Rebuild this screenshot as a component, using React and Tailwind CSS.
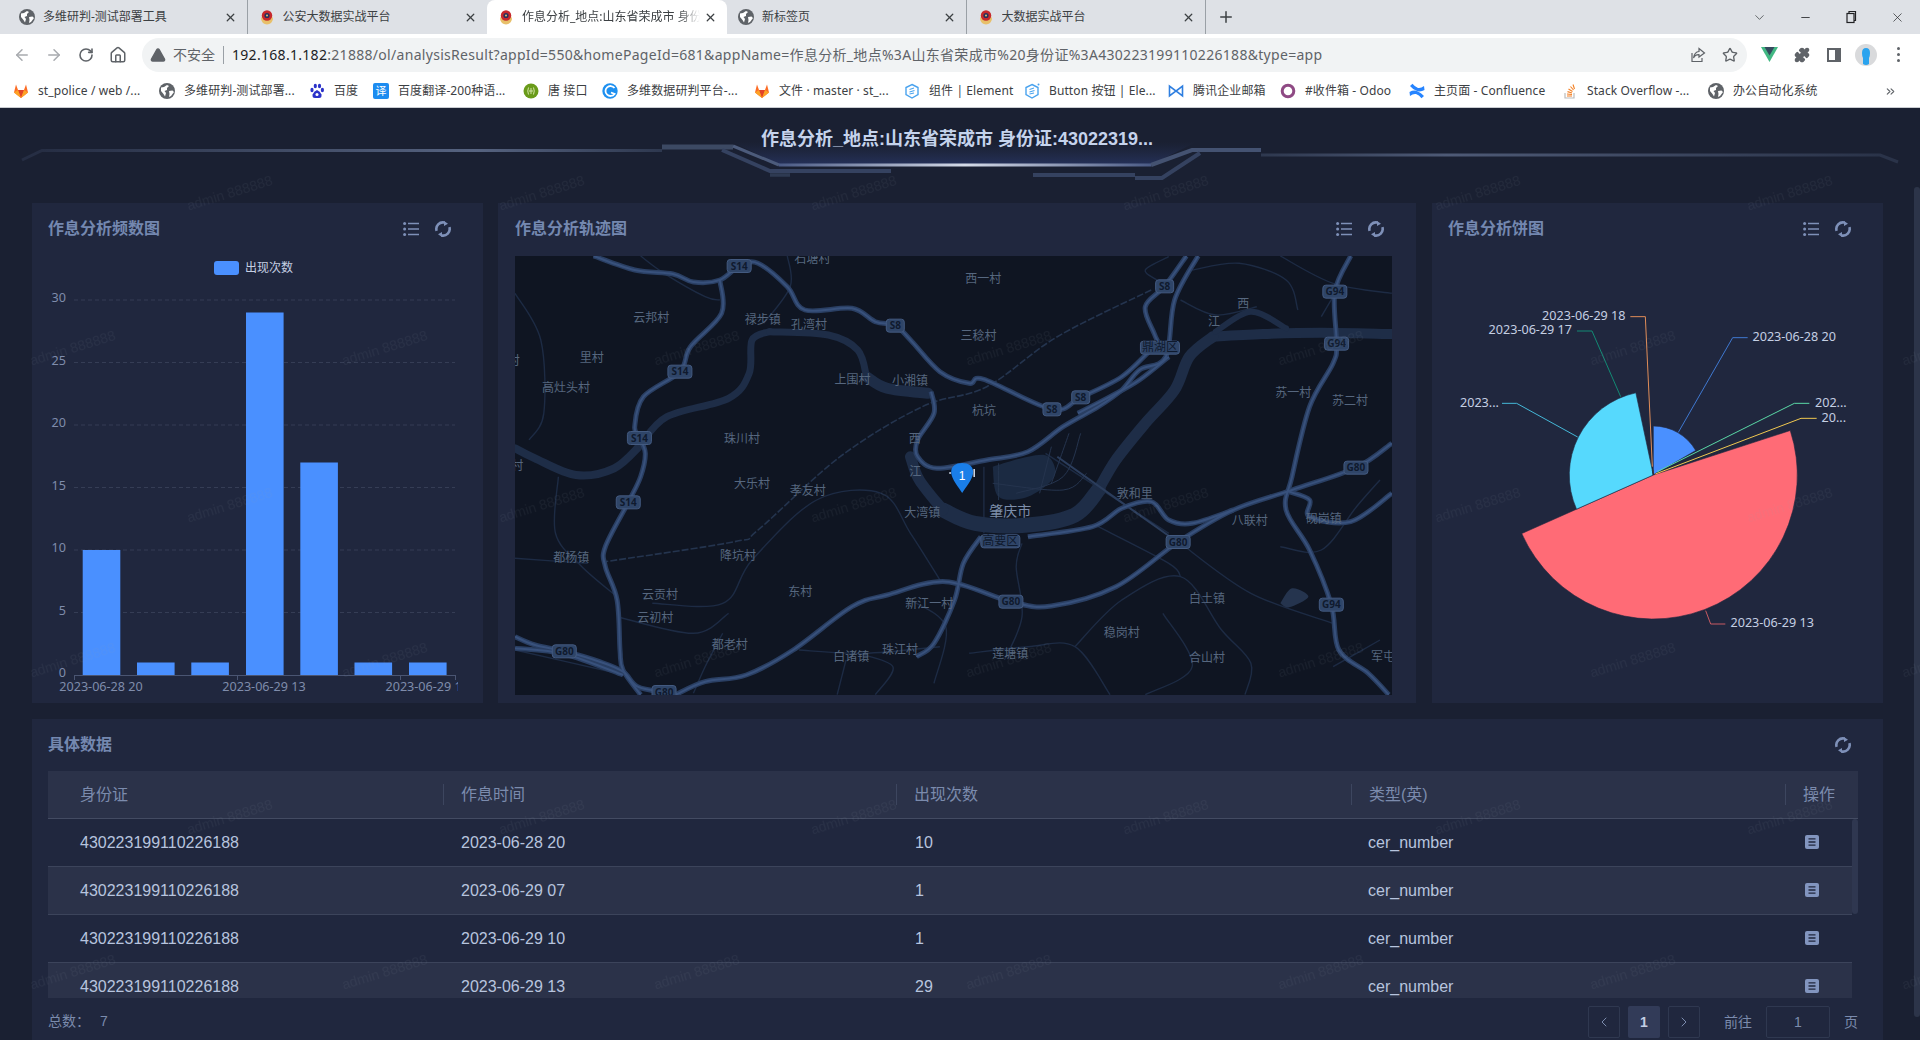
import React from 'react';
import { ArrowLeft, ArrowRight, RotateCw, Home, Star, Puzzle, ChevronDown, Minus, X, Plus, ChevronLeft, ChevronRight, TriangleAlert, ChevronsRight } from 'lucide-react';

const Globe = () => (
  <svg width="16" height="16" viewBox="0 0 16 16" className="shrink-0">
    <circle cx="8" cy="8" r="8" fill="#5f6368" />
    <path d="M2 4.5 L5 4 L8 2 L10 3 L8 5 L8 7 L5.5 8 L7 10 L6 13.5 L4.5 11 L2 8 Z M10 8 L13.5 7.5 L15 9 L12 13 L10 14 L10.5 11 Z" fill="#fff" />
  </svg>
);
const Police = () => (
  <svg width="16" height="16" viewBox="0 0 16 16" className="shrink-0">
    <path d="M2 10 Q3 15 8 15.5 Q13 15 14 10 L12 4 L4 4 Z" fill="#e8c06a" />
    <circle cx="8" cy="6.5" r="5.2" fill="#c6282c" />
    <circle cx="8" cy="6.5" r="2.6" fill="#27305e" />
    <circle cx="8" cy="6.5" r="1" fill="#e8c06a" />
  </svg>
);
const Fox = () => (
  <svg width="16" height="16" viewBox="0 0 16 16" className="shrink-0">
    <path d="M8 15 L1 9.5 L3 1.5 L5 7 L11 7 L13 1.5 L15 9.5 Z" fill="#fc6d26" />
    <path d="M8 15 L5 7 L11 7 Z" fill="#e24329" />
    <path d="M8 15 L1 9.5 L5 7 Z M8 15 L15 9.5 L11 7 Z" fill="#fca326" />
  </svg>
);
const Paw = () => (
  <svg width="16" height="16" viewBox="0 0 16 16" className="shrink-0" fill="#2b32c9">
    <ellipse cx="3" cy="7" rx="1.6" ry="2.2" /><ellipse cx="6.3" cy="3" rx="1.6" ry="2.2" /><ellipse cx="10.5" cy="3" rx="1.6" ry="2.2" /><ellipse cx="13.4" cy="7" rx="1.6" ry="2.2" />
    <path d="M8 7 Q11 8 12.5 11.5 Q13 15 10 15 L6 15 Q3 15 3.6 11.5 Q5 8 8 7 Z" />
    <circle cx="8" cy="11.5" r="1.5" fill="#fff" />
  </svg>
);
const Fanyi = () => (
  <span className="w-4 h-4 rounded-[2px] bg-[#1d8cf0] text-white text-[11px] leading-4 text-center shrink-0">译</span>
);
const Api = () => (
  <svg width="16" height="16" viewBox="0 0 16 16" className="shrink-0">
    <circle cx="8" cy="8" r="7.5" fill="#6a9b1a" />
    <path d="M5.5 4.5 Q4 8 5.5 11.5 M10.5 4.5 Q12 8 10.5 11.5 M6 8 H10 M8 5 V11" stroke="#d4e4a8" strokeWidth="1" fill="none" />
  </svg>
);
const Swirl = () => (
  <svg width="16" height="16" viewBox="0 0 16 16" className="shrink-0">
    <circle cx="8" cy="8" r="7.7" fill="#1e90f0" />
    <path d="M12.5 5 A5 5 0 1 0 12.5 11 L9 9.5" stroke="#fff" strokeWidth="1.8" fill="none" />
  </svg>
);
const Hex = ({ plus }) => (
  <svg width="16" height="16" viewBox="0 0 16 16" className="shrink-0">
    <path d="M8 1.5 L14 4.5 V11.5 L8 15 L2 11.5 V4.5 Z" stroke="#4aa3ee" strokeWidth="1.4" fill="#fff" />
    <path d="M5.5 6.5 L10 5 M5.5 9 L10.5 7.5 M5.5 11 L10 10" stroke="#4aa3ee" strokeWidth="1.1" />
    {plus && <circle cx="14.5" cy="1.5" r="1" fill="#4aa3ee" />}
  </svg>
);
const Mail = () => (
  <svg width="16" height="16" viewBox="0 0 16 16" className="shrink-0" fill="none" stroke="#2f7fe0" strokeWidth="1.6">
    <path d="M1.5 3 V13 L8 8 L1.5 3 Z M14.5 3 V13 L8 8 L14.5 3 Z" />
  </svg>
);
const Odoo = () => (
  <svg width="16" height="16" viewBox="0 0 16 16" className="shrink-0"><circle cx="8" cy="8" r="5.8" stroke="#8f4a84" strokeWidth="3" fill="none" /></svg>
);
const Conf = () => (
  <svg width="16" height="16" viewBox="0 0 16 16" className="shrink-0" fill="#2684ff">
    <path d="M1 3 L3.5 0.8 Q6 4 9 5 Q12 5.5 15 3 L15.5 7 Q11 9.5 7 7.5 Q3.5 6 1 3 Z" />
    <path d="M15 13 L12.5 15.2 Q10 12 7 11 Q4 10.5 1 13 L0.5 9 Q5 6.5 9 8.5 Q12.5 10 15 13 Z" />
  </svg>
);
const SO = () => (
  <svg width="16" height="16" viewBox="0 0 16 16" className="shrink-0" fill="none">
    <path d="M3 10 V15 H12 V10" stroke="#bcbbbb" strokeWidth="1.2" />
    <path d="M5 13 H10 M5 11 L10 11.5 M5.5 8.6 L10 10 M6.5 6 L10.5 8.5 M8.5 3.5 L11.5 7 M11 1.5 L12.5 6" stroke="#f48024" strokeWidth="1.1" />
  </svg>
);

const tabs = [
  { t: '多维研判-测试部署工具', i: <Globe /> },
  { t: '公安大数据实战平台', i: <Police /> },
  { t: '作息分析_地点:山东省荣成市 身份', i: <Police />, active: true },
  { t: '新标签页', i: <Globe /> },
  { t: '大数据实战平台', i: <Police /> },
];
const marks = [
  { w: 'w-[146px]', i: <Fox />, t: 'st_police / web /...' },
  { w: 'w-[150px]', i: <Globe />, t: '多维研判-测试部署...' },
  { w: 'w-[64px]', i: <Paw />, t: '百度' },
  { w: 'w-[150px]', i: <Fanyi />, t: '百度翻译-200种语...' },
  { w: 'w-[79px]', i: <Api />, t: '唐 接口' },
  { w: 'w-[152px]', i: <Swirl />, t: '多维数据研判平台-...' },
  { w: 'w-[150px]', i: <Fox />, t: '文件 · master · st_...' },
  { w: 'w-[120px]', i: <Hex />, t: '组件 | Element' },
  { w: 'w-[144px]', i: <Hex plus />, t: 'Button 按钮 | Ele...' },
  { w: 'w-[112px]', i: <Mail />, t: '腾讯企业邮箱' },
  { w: 'w-[129px]', i: <Odoo />, t: '#收件箱 - Odoo' },
  { w: 'w-[153px]', i: <Conf />, t: '主页面 - Confluence' },
  { w: 'w-[146px]', i: <SO />, t: 'Stack Overflow -...' },
  { w: 'w-[150px]', i: <Globe />, t: '办公自动化系统' },
];

function Browser() {
  return (
    <div className="shrink-0 font-['Noto_Sans','Noto_Sans_CJK_SC',sans-serif]">
      <div className="h-[34px] bg-[#dee1e6] flex pl-2">
        {tabs.map((t, i) => (
          <div key={i} className={'h-full flex items-center pl-[11px] pr-[10px] ' + (t.active ? 'w-[240px] bg-white rounded-t-[8px]' : 'w-[239.5px] ' + (i === 0 || i === 3 || i === 4 ? 'border-r border-[#9aa0a6] ' : ''))}>
            {t.i}
            <span className={"ml-2 flex-1 whitespace-nowrap overflow-hidden text-[12px] text-[#3c4043] " + (t.active ? '[mask-image:linear-gradient(to_right,black_88%,transparent)]' : '')}>{t.t}</span>
            <X size={13} strokeWidth={2.4} color="#3c4043" className="shrink-0 ml-1" />
          </div>
        ))}
        <div className="w-[40px] flex items-center justify-center"><Plus size={18} strokeWidth={2} color="#3c4043" /></div>
        <div className="ml-auto flex h-full">
          <div className="w-[46px] flex items-center justify-center"><ChevronDown size={15} strokeWidth={1.2} color="#3c4043" /></div>
          <div className="w-[46px] flex items-center justify-center"><Minus size={13} strokeWidth={1.5} color="#202124" /></div>
          <div className="w-[46px] flex items-center justify-center">
            <svg width="12" height="14" viewBox="0 0 12 14" fill="none" stroke="#202124" strokeWidth="1.2"><rect x="2" y="3.5" width="7" height="9" /><path d="M4 3.5 V1.5 H10.5 V10.5 H9" /></svg>
          </div>
          <div className="w-[46px] flex items-center justify-center"><X size={15} strokeWidth={1.1} color="#202124" /></div>
        </div>
      </div>
      <div className="h-[41px] bg-white flex items-center pl-[6px]">
        <div className="w-8 flex justify-center"><ArrowLeft size={18} color="#a8abaf" /></div>
        <div className="w-8 flex justify-center"><ArrowRight size={18} color="#a8abaf" /></div>
        <div className="w-8 flex justify-center"><RotateCw size={16} strokeWidth={2.4} color="#5f6368" /></div>
        <div className="w-8 flex justify-center"><Home size={18} strokeWidth={2} color="#5f6368" /></div>
        <div className="ml-2 w-[1605px] h-[34px] bg-[#f1f3f4] rounded-full flex items-center pl-[8px]">
          <TriangleAlert size={16} fill="#5f6368" color="#5f6368" className="shrink-0" />
          <span className="ml-[7px] text-[14px] text-[#5f6368] whitespace-nowrap">不安全</span>
          <span className="ml-2 h-[18px] border-l border-[#9aa0a6]" />
          <span className="ml-2 text-[14px] tracking-[0.3px] text-[#5f6368] whitespace-nowrap flex-1"><span className="text-[#202124]">192.168.1.182</span>:21888/ol/analysisResult?appId=550&amp;homePageId=681&amp;appName=作息分析_地点%3A山东省荣成市%20身份证%3A430223199110226188&amp;type=app</span>
          <svg width="16" height="16" viewBox="0 0 16 16" fill="none" stroke="#5f6368" strokeWidth="1.2" className="shrink-0"><path d="M2 6 V14.5 H12 V11" /><path d="M9 1.5 L14.5 6 L9 10 V7.7 Q5 7.5 3.5 11 Q4.5 4.8 9 4.5 Z" /></svg>
          <Star size={16} strokeWidth={2} color="#5f6368" className="ml-4 mr-[9px] shrink-0" />
        </div>
        <div className="flex ml-[7px]">
          <div className="w-8 pl-[7px] flex items-center"><svg width="17" height="15" viewBox="0 0 17 15"><path d="M0 0 H17 L8.5 15 Z" fill="#42b883" /><path d="M3.5 0 H13.5 L8.5 8.5 Z" fill="#35495e" /></svg></div>
          <div className="w-8 flex justify-center items-center"><Puzzle size={16} fill="#5f6368" color="#5f6368" /></div>
          <div className="w-8 flex justify-center items-center"><div className="w-[14px] h-[14px] border-2 border-[#5f6368] border-r-[6px]" /></div>
          <div className="w-8 flex justify-center items-center"><svg width="22" height="22" viewBox="0 0 22 22"><circle cx="11" cy="11" r="11" fill="#d9dadc" /><path d="M7 9 Q7 4 11 4 Q15 4 15 9 Q15 12 14 14 V20 Q11 22 8 20 V14 Q7 12 7 9 Z" fill="#2aa3ee" /></svg></div>
          <div className="w-8 flex flex-col items-center justify-center gap-[3px]"><i className="w-[3px] h-[3px] rounded-full bg-[#5f6368]" /><i className="w-[3px] h-[3px] rounded-full bg-[#5f6368]" /><i className="w-[3px] h-[3px] rounded-full bg-[#5f6368]" /></div>
        </div>
      </div>
      <div className="h-[33px] bg-white border-b border-[#c9ccd1] flex items-center pl-[13px]">
        {marks.map((m, i) => (
          <div key={i} className={m.w + ' flex items-center shrink-0'}>
            {m.i}
            <span className="ml-[9px] text-[12px] text-[#3c4043] whitespace-nowrap tracking-[0.1px]">{m.t}</span>
          </div>
        ))}
        <ChevronsRight size={13} color="#5f6368" className="ml-[26px]" />
      </div>
    </div>
  );
}

const ListIcon = () => (
  <svg width="16" height="16" viewBox="0 0 16 16" stroke="#7e90b8" strokeWidth="1.4" fill="none">
    <path d="M5 2.5 H16 M5 8 H16 M5 13.5 H16" />
    <g fill="#7e90b8" stroke="none"><circle cx="1.6" cy="2.5" r="1.5" /><circle cx="1.6" cy="8" r="1.5" /><circle cx="1.6" cy="13.5" r="1.5" /></g>
  </svg>
);
const RefreshIcon = () => (
  <svg width="16" height="16" viewBox="0 0 16 16" fill="none">
    <path d="M1.6 9.8 A6.6 6.6 0 0 1 9.6 1.6" stroke="#7e90b8" strokeWidth="2.6" />
    <path d="M14.4 6.2 A6.6 6.6 0 0 1 6.4 14.4" stroke="#7e90b8" strokeWidth="2.6" />
    <path d="M9 0 L13 2.8 L9 5 Z M7 16 L3 13.2 L7 11 Z" fill="#7e90b8" />
  </svg>
);

function Head({ title, list = true, pl = 'pl-4' }) {
  return (
    <div className={'h-[52px] flex items-center pr-8 ' + pl}>
      <span className="text-[16px] font-bold text-[#7488b0] flex-1">{title}</span>
      {list && <span className="mr-4 flex"><ListIcon /></span>}
      <span className="flex"><RefreshIcon /></span>
    </div>
  );
}

const bars = [[82.7, 10], [137, 1], [191.3, 1], [246, 29], [300.3, 17], [354.5, 1], [409, 1]];
function BarChart() {
  const Y = v => 675 - v * 12.5;
  const lab = { fontSize: 12.6, fill: '#7f8cab', fontFamily: 'Noto Sans' };
  return (
    <svg width="451" height="448" viewBox="32 255 451 448" className="block">
      <defs><clipPath id="cx"><rect x="32" y="676" width="426" height="24" /></clipPath></defs>
      <rect x="214" y="261" width="25" height="14" rx="3" fill="#4a90ff" />
      <text x="245" y="271.5" fontSize="12" fill="#c5cfe3" fontFamily="Noto Sans CJK SC">出现次数</text>
      {[5, 10, 15, 20, 25, 30].map(v => <line key={v} x1="74" x2="455" y1={Y(v)} y2={Y(v)} stroke="#353d55" strokeDasharray="4 3" />)}
      {[0, 5, 10, 15, 20, 25, 30].map(v => <text key={v} x="66" y={Y(v) + 2} textAnchor="end" style={lab}>{v}</text>)}
      {bars.map(([x, v], i) => <rect key={i} x={x} y={Y(v)} width="37.6" height={v * 12.5} fill="#4a90ff" />)}
      <path d="M74 675.5 H455.5 M74.5 675 V680 M237.5 675 V680 M400.5 675 V680 M455.5 675 V680" stroke="#4a5572" fill="none" />
      <g clipPath="url(#cx)">
        <text x="101" y="691" textAnchor="middle" style={lab}>2023-06-28 20</text>
        <text x="264" y="691" textAnchor="middle" style={lab}>2023-06-29 13</text>
        <text x="385.5" y="691" style={lab}>2023-06-29 17</text>
      </g>
    </svg>
  );
}

function sector(cx, cy, r, a0, a1) {
  const p = a => [cx + r * Math.sin(a * Math.PI / 180), cy - r * Math.cos(a * Math.PI / 180)];
  const [x0, y0] = p(a0), [x1, y1] = p(a1);
  return `M${cx} ${cy} L${x0} ${y0} A${r} ${r} 0 ${a1 - a0 > 180 ? 1 : 0} 1 ${x1} ${y1} Z`;
}
const Z = pts => 'M' + pts.map(([x, y]) => `${1420 + x / 3} ${200 + y / 3}`).join(' L');
function PieChart() {
  const cx = 1653.3, cy = 475;
  const s = [[0, 60, 49, '#4a90ff'], [60, 66, 5, '#5ad8a6'], [66, 72, 5, '#f6c94a'], [72, 246, 144, '#ff6b76'], [246, 348, 84, '#56d9fd'], [348, 354, 5, '#1f9e89'], [354, 360, 5, '#e8915a']];
  const lines = [
    [[775, 697], [938, 413], [983, 413], '#3f78d0'],
    [[712, 815], [1123, 610], [1168, 610], '#5ad8a6'],
    [[706, 822], [1143, 655], [1190, 655], '#f0c850'],
    [[857, 1232], [872, 1272], [916, 1272], '#c85a62'],
    [[473, 711], [290, 610], [246, 610], '#45b8d8'],
    [[602, 590], [516, 393], [471, 393], '#128a74'],
    [[697, 800], [676, 350], [631, 350], '#e08d58'],
  ];
  const t = { fontSize: 12.6, fill: '#c5cfe3', fontFamily: 'Noto Sans' };
  return (
    <svg width="451" height="448" viewBox="1432 255 451 448" className="block">
      {s.map(([a, b, r, c], i) => <path key={i} d={sector(cx, cy, r, a, b)} fill={c} stroke="#20273e" strokeWidth="0.6" />)}
      {lines.map((l, i) => <path key={i} d={Z(l.slice(0, 3))} stroke={l[3]} fill="none" strokeWidth="1" />)}
      <text x="1752.5" y="341" style={t}>2023-06-28 20</text>
      <text x="1815" y="407" style={t}>202...</text>
      <text x="1821.5" y="422" style={t}>20...</text>
      <text x="1730.5" y="627" style={t}>2023-06-29 13</text>
      <text x="1460" y="407" style={t}>2023...</text>
      <text x="1572" y="334" textAnchor="end" style={t}>2023-06-29 17</text>
      <text x="1625.5" y="320" textAnchor="end" style={t}>2023-06-29 18</text>
    </svg>
  );
}

const mx = x => (x - 26) / 1.704;
const my = y => (y - 168) / 3;
function curve(pts) {
  const p = pts.map(([x, y]) => [mx(x), my(y)]);
  let d = `M${p[0][0].toFixed(1)} ${p[0][1].toFixed(1)}`;
  for (let i = 0; i < p.length - 1; i++) {
    const a = p[i - 1] || p[i], b = p[i], c = p[i + 1], e = p[i + 2] || c;
    d += ` C${(b[0] + (c[0] - a[0]) / 6).toFixed(1)} ${(b[1] + (c[1] - a[1]) / 6).toFixed(1)} ${(c[0] - (e[0] - b[0]) / 6).toFixed(1)} ${(c[1] - (e[1] - b[1]) / 6).toFixed(1)} ${c[0].toFixed(1)} ${c[1].toFixed(1)}`;
  }
  return d;
}
const rivers = [
  [10, [[1520, 402], [1400, 398], [1300, 402], [1215, 410]]],
  [11, [[1215, 410], [1175, 470], [1150, 570], [1100, 670], [1050, 780], [1020, 870]]],
  [15, [[1020, 870], [980, 945], [900, 975], [810, 970], [755, 930]]],
  [11, [[755, 930], [715, 840], [700, 770]]],
  [6, [[1220, 395], [1280, 335], [1340, 385]]],
  [8, [[26, 745], [60, 775], [130, 825], [195, 805], [240, 735]]],
  [7, [[240, 735], [285, 650], [390, 595], [425, 520], [430, 420], [460, 395]]],
  [7, [[460, 395], [560, 405], [610, 450], [625, 530]]],
  [11, [[625, 530], [660, 565], [730, 580]]],
];
const highways = [
  [[160, 168], [230, 210], [295, 222], [330, 246], [375, 240], [408, 198], [440, 190], [490, 260], [520, 330], [600, 325], [640, 365], [674, 377], [700, 420], [750, 515], [800, 550], [825, 538], [941, 628], [990, 592], [1060, 530], [1110, 450], [1125, 443], [1115, 400], [1100, 320], [1133, 259], [1170, 168]],
  [[375, 240], [378, 340], [325, 440], [307, 515], [245, 590], [230, 680], [238, 714], [248, 760], [240, 830], [219, 907], [180, 1040], [180, 1100], [200, 1200], [205, 1350], [210, 1410], [240, 1484]],
  [[26, 1310], [60, 1335], [110, 1354], [170, 1385], [210, 1415], [235, 1460], [280, 1476]],
  [[26, 1345], [110, 1362], [210, 1425]],
  [[300, 1484], [350, 1445], [420, 1425], [500, 1350], [600, 1220], [660, 1185], [760, 1145], [871, 1205], [940, 1218], [1050, 1160], [1156, 1026], [1250, 930], [1350, 870], [1459, 803], [1520, 730]],
  [[1450, 168], [1423, 275], [1426, 431], [1420, 490], [1380, 620], [1350, 830], [1340, 930], [1380, 1050], [1417, 1214], [1430, 1350], [1480, 1420], [1515, 1484]],
  [[735, 575], [740, 640], [712, 720], [712, 770], [745, 805], [830, 780], [900, 755], [960, 680], [1020, 620], [1060, 570], [1090, 510], [1135, 470], [1150, 300], [1190, 168]],
  [[985, 640], [1040, 590], [1090, 540], [1140, 470]],
  [[900, 1010], [1010, 980], [1060, 925], [1110, 905], [1140, 960], [1180, 970], [1250, 930]],
  [[1345, 875], [1380, 900], [1380, 950], [1450, 965], [1520, 880]],
  [[820, 1010], [790, 1090], [775, 1200], [740, 1330], [710, 1370]],
];
const thin = [
  [[26, 280], [70, 420], [75, 640], [50, 720]], [[490, 168], [495, 260], [450, 370]], [[100, 830], [95, 1000], [140, 1100], [200, 1190]],
  [[260, 1210], [380, 1210], [430, 1080], [540, 900], [650, 880], [700, 1000], [750, 1140]], [[200, 1250], [330, 1300], [390, 1240]], [[380, 1300], [350, 1400], [330, 1480]],
  [[26, 1350], [200, 1420]], [[510, 1350], [620, 1360], [750, 1340]], [[590, 1380], [575, 1484]], [[800, 1360], [900, 1340], [980, 1340], [1040, 1484]],
  [[890, 1030], [880, 1100], [890, 1250], [860, 1380]], [[980, 1340], [1060, 1200], [1160, 1130], [1230, 1290], [1280, 1390], [1270, 1484]], [[1020, 980], [1140, 1090], [1160, 1130]],
  [[1160, 1030], [1280, 1180], [1420, 1270]], [[1180, 210], [1260, 190], [1340, 240], [1360, 330]], [[1160, 300], [1220, 345], [1290, 320]], [[1500, 840], [1460, 920], [1400, 1050], [1330, 1040]],
  [[1400, 350], [1420, 290]], [[1330, 168], [1420, 250], [1520, 280]], [[1140, 170], [1100, 210], [1120, 240]], [[930, 760], [1140, 1000]], [[825, 800], [825, 1000]], [[26, 1075], [150, 1090]],
  [[1420, 1400], [1500, 1320]], [[240, 168], [280, 220], [350, 290], [375, 300]], [[700, 1200], [760, 1280], [740, 1450]], [[1130, 1240], [1180, 1400], [1100, 1484]], [[640, 1484], [670, 1400], [610, 1360]],
];
const cityLines = [[[880, 880], [960, 830], [990, 700]], [[940, 740], [920, 880]], [[970, 700], [940, 850]], [[840, 850], [960, 870], [1000, 820]], [[850, 790], [850, 900]]];
const rails = [[1110, 270], [950, 410], [830, 560], [720, 620], [580, 770], [440, 990], [400, 1025], [180, 1085]];
const labels = [
  ['石塘村', 533, 177], ['西一村', 824, 238], ['云邦村', 258, 353], ['禄步镇', 448, 361], ['孔湾村', 527, 376], ['三稔村', 816, 407], ['里村', 157, 474], ['高灶头村', 113, 565], ['上围村', 601, 541], ['小湘镇', 699, 543], ['杭坑', 825, 632], ['西', 1267, 313], ['江', 1217, 367], ['苏一村', 1352, 578], ['苏二村', 1449, 603], ['珠川村', 413, 716], ['西', 707, 717], ['江', 708, 815], ['大乐村', 430, 852], ['孝友村', 525, 874], ['敦和里', 1082, 882], ['大湾镇', 720, 939], ['八联村', 1278, 963], ['砚岗镇', 1404, 958], ['都杨镇', 122, 1074], ['降坑村', 406, 1069], ['云贡村', 273, 1186], ['东村', 512, 1175], ['新江一村', 732, 1213], ['白土镇', 1205, 1198], ['云初村', 265, 1253], ['稳岗村', 1060, 1299], ['都老村', 392, 1334], ['珠江村', 682, 1349], ['白诸镇', 599, 1371], ['莲塘镇', 870, 1362], ['合山村', 1205, 1374], ['军屯', 1505, 1371], ['村', 24, 482], ['村', 30, 797],
];
const badges = [
  ['S14', 408, 198], ['S8', 674, 377], ['S14', 307, 515], ['S8', 941, 628], ['S8', 990, 592], ['S8', 1133, 259], ['G94', 1423, 275], ['G94', 1426, 431], ['S14', 238, 714], ['G80', 1459, 803], ['S14', 219, 907], ['G80', 1156, 1026], ['G80', 871, 1205], ['G94', 1417, 1214], ['G80', 110, 1354], ['G80', 280, 1476], ['鼎湖区', 1125, 443], ['高要区', 853, 1024],
];
function MapView() {
  return (
    <svg width="877" height="439" viewBox="0 0 877 439" className="block bg-[#0f1522]">
      {thin.map((r, i) => <path key={i} d={curve(r)} fill="none" stroke="#1d2b44" strokeWidth="1.4" />)}
      <path d={curve([[840, 800], [900, 770], [935, 770], [945, 830], [900, 890], [850, 890], [840, 800]])} fill="#1b2a42" />
      <path d={curve([[1330, 1210], [1350, 1165], [1378, 1190], [1345, 1222], [1330, 1210]])} fill="#25344e" />
      {cityLines.map((r, i) => <path key={i} d={curve(r)} fill="none" stroke="#25344e" strokeWidth="1" />)}
      {rivers.map(([w, r], i) => <path key={i} d={curve(r)} fill="none" stroke="#1e2d47" strokeWidth={w} strokeLinecap="round" />)}
      <path d={curve(rails)} fill="none" stroke="#24344e" strokeWidth="1.6" strokeDasharray="7 2" />
      <path d={curve([[950, 770], [1150, 1020]])} fill="none" stroke="#2b3d5c" strokeWidth="2" />
      {highways.map((r, i) => <path key={i} d={curve(r)} fill="none" stroke="#2a3f63" strokeWidth="5" strokeLinejoin="round" />)}
      {highways.map((r, i) => <path key={i} d={curve(r)} fill="none" stroke="#38517c" strokeWidth="2" strokeLinejoin="round" />)}
      {labels.map(([t, x, y], i) => <text key={i} x={mx(x)} y={my(y) + 4} textAnchor="middle" fontSize="12" fill="#56677f" fontFamily="Noto Sans CJK SC">{t}</text>)}
      <text x={mx(870)} y={my(932) + 5} textAnchor="middle" fontSize="14" fill="#7d8eaa" fontFamily="Noto Sans CJK SC">肇庆市</text>
      {badges.map(([t, x, y], i) => {
        const cjk = t.charCodeAt(0) > 255;
        const w = cjk ? 39 : t.length === 2 ? 18 : 24;
        return (
          <g key={i}>
            <rect x={mx(x) - w / 2} y={my(y) - 6.5} width={w} height="13" rx="3" fill="#2f4568" stroke="#435a80" />
            <text x={mx(x)} y={my(y) + 3.8} textAnchor="middle" fontSize={cjk ? 12 : 10} fontWeight={cjk ? 400 : 700} fill="#0f1a2e" fontFamily="Noto Sans,Noto Sans CJK SC">{t}</text>
          </g>
        );
      })}
      <g transform={`translate(${mx(788)} ${my(789)})`}>
        <path d="M-13 10 H-11 M12 6 V14" stroke="#d8e2f0" strokeWidth="1.5" />
        <path d="M0 30 C-3 25 -11 16 -11 9 C-11 3 -6 0 0 0 C6 0 11 3 11 9 C11 16 3 25 0 30 Z" fill="#1a7ee8" />
        <text x="0" y="17" textAnchor="middle" fontSize="12" fill="#fff" fontFamily="Liberation Sans">1</text>
      </g>
    </svg>
  );
}

const Panel = ({ className, children }) => <div className={'bg-[#20273e] ' + className}>{children}</div>;

const rows = [['2023-06-28 20', '10'], ['2023-06-29 07', '1'], ['2023-06-29 10', '1'], ['2023-06-29 13', '29']];
function DataTable() {
  const hd = 'h-full flex items-center text-[16px] text-[#7b8bad] shrink-0';
  const sep = <i className="h-[21px] border-l border-[#3d465f] mr-[17px]" />;
  return (
    <div className="w-[1810px]">
      <div className="h-[48px] flex bg-[#2b3249] border-b border-[#434b62]">
        <div className={hd + ' w-[395px] pl-8'}>身份证</div>
        <div className={hd + ' w-[453px]'}>{sep}作息时间</div>
        <div className={hd + ' w-[455px]'}>{sep}出现次数</div>
        <div className={hd + ' w-[434px]'}>{sep}类型(英)</div>
        <div className={hd + ' flex-1'}>{sep}操作</div>
      </div>
      <div className="h-[179px] flex overflow-hidden">
        <div className="w-[1804px]">
          {rows.map(([t, n], i) => (
            <div key={i} className={'h-[48px] flex items-center border-b border-[#3c445b] text-[16px] text-[#b7c4de] ' + (i % 2 ? 'bg-[#2b3249]' : '')}>
              <div className="w-[413px] pl-8 shrink-0">430223199110226188</div>
              <div className="w-[454px] shrink-0">{t}</div>
              <div className="w-[453px] shrink-0">{n}</div>
              <div className="w-[436px] shrink-0">cer_number</div>
              <svg width="14" height="14" viewBox="0 0 14 14" className="shrink-0 -mt-[2px] ml-px"><rect width="14" height="14" rx="2" fill="#8295bf" /><path d="M3.5 3.8 H10.5 M3.5 7 H10.5 M3.5 10.2 H10.5" stroke="#20273e" strokeWidth="1.3" /></svg>
            </div>
          ))}
        </div>
        <div className="w-[6px]"><div className="h-[95px] bg-[#2f3750] rounded-[3px]" /></div>
      </div>
    </div>
  );
}

function Pager() {
  const btn = 'w-8 h-8 border border-[#2f3850] rounded-[2px] flex items-center justify-center';
  return (
    <div className="flex items-center text-[14px] text-[#7b8bad]">
      <div className={btn}><ChevronLeft size={16} strokeWidth={1.5} color="#7b8bad" /></div>
      <div className="ml-2 w-8 h-8 bg-[#323b58] rounded-[2px] flex items-center justify-center text-[#c3cee4] font-bold">1</div>
      <div className={'ml-2 ' + btn}><ChevronRight size={16} strokeWidth={1.5} color="#7b8bad" /></div>
      <span className="ml-6">前往</span>
      <div className="ml-[14px] w-16 h-8 border border-[#2f3850] rounded-[2px] flex items-center justify-center">1</div>
      <span className="ml-[14px]">页</span>
    </div>
  );
}

function Banner() {
  return (
    <svg width="1914" height="95" viewBox="0 108 1914 95" className="absolute inset-0" fill="none">
      <defs>
        <linearGradient id="gf" x1="0" y1="0" x2="0" y2="1"><stop offset="0" stopColor="#222d4c" stopOpacity="0" /><stop offset="1" stopColor="#25315a" /></linearGradient>
        <linearGradient id="gm" x1="779" x2="1151" y1="0" y2="0" gradientUnits="userSpaceOnUse"><stop offset="0" stopColor="#4a5a85" /><stop offset=".5" stopColor="#d5dbe8" /><stop offset="1" stopColor="#4a5a85" /></linearGradient>
        <linearGradient id="gl" x1="42" x2="662" y1="0" y2="0" gradientUnits="userSpaceOnUse"><stop offset="0" stopColor="#262e44" /><stop offset=".7" stopColor="#566380" /><stop offset="1" stopColor="#2e384f" /></linearGradient>
        <linearGradient id="gr" x1="1261" x2="1880" y1="0" y2="0" gradientUnits="userSpaceOnUse"><stop offset="0" stopColor="#2e384f" /><stop offset=".3" stopColor="#4e5a76" /><stop offset="1" stopColor="#2a3349" /></linearGradient>
      </defs>
      <path d="M733 142 L779 165 H1151 L1196 142 Z" fill="url(#gf)" />
      <path d="M22 160 L42 150.5 H662" stroke="url(#gl)" strokeWidth="3" />
      <path d="M662 147 H733" stroke="#3c4963" strokeWidth="5" />
      <path d="M733 146 L779 165" stroke="#4c5b7b" strokeWidth="3" />
      <path d="M722 150 L770 171 H891" stroke="#354260" strokeWidth="4" />
      <path d="M770 175 H790" stroke="#2e3a52" strokeWidth="3.5" />
      <path d="M779 165 H1151" stroke="url(#gm)" strokeWidth="3" />
      <path d="M1151 165 L1192 150 H1261" stroke="#445271" strokeWidth="4" />
      <path d="M1261 155 H1880 L1898 162" stroke="url(#gr)" strokeWidth="3" />
      <path d="M1033 175 H1135 M1135 178 H1162 L1200 153" stroke="#354260" strokeWidth="4" />
    </svg>
  );
}

export default function App() {
  return (
    <div className="w-[1920px] h-[1040px] overflow-hidden flex flex-col bg-[#1a2032] font-['Liberation_Sans','Noto_Sans_CJK_SC',sans-serif]">
      <Browser />
      <div className="relative flex-1 flex overflow-hidden">
        <div className="w-[1914px] shrink-0">
          <div className="relative h-[95px] flex justify-center">
            <Banner />
            <h1 className="relative pt-[19px] text-[18px] leading-6 font-bold text-[#c5d3ec]">作息分析_地点:山东省荣成市 身份证:43022319...</h1>
          </div>
          <div className="flex pl-8 h-[500px]">
            <Panel className="w-[451px]"><Head title="作息分析频数图" /><BarChart /></Panel>
            <Panel className="w-[918px] ml-[15px]"><Head title="作息分析轨迹图" pl="pl-[17px]" /><div className="ml-[17px] mt-px"><MapView /></div></Panel>
            <Panel className="w-[451px] ml-4"><Head title="作息分析饼图" /><PieChart /></Panel>
          </div>
          <Panel className="ml-8 mt-4 w-[1851px] h-[321px] pl-4">
            <div className="-ml-4"><Head title="具体数据" list={false} /></div>
            <DataTable />
            <div className="w-[1810px] pt-2 flex justify-between items-start">
              <span className="text-[14px] leading-[30px] text-[#7b8bad]">总数：<span className="ml-[10px]">7</span></span>
              <Pager />
            </div>
          </Panel>
        </div>
        <div className="flex-1 pt-[79px]"><div className="h-[830px] bg-[#2c3449] rounded-[3px]" /></div>
        <svg width="1920" height="932" className="absolute inset-0 pointer-events-none">
          <defs>
            <pattern id="wm" width="312" height="312" patternUnits="userSpaceOnUse">
              <text transform="translate(230 86) rotate(-17)" textAnchor="middle" dominantBaseline="middle" fontSize="14" fill="#8a93a8" fillOpacity="0.08" fontFamily="Liberation Sans">admin 888888</text>
              <text transform="translate(73 241) rotate(-17)" textAnchor="middle" dominantBaseline="middle" fontSize="14" fill="#8a93a8" fillOpacity="0.08" fontFamily="Liberation Sans">admin 888888</text>
            </pattern>
          </defs>
          <rect width="1920" height="932" fill="url(#wm)" />
        </svg>
      </div>
    </div>
  );
}
